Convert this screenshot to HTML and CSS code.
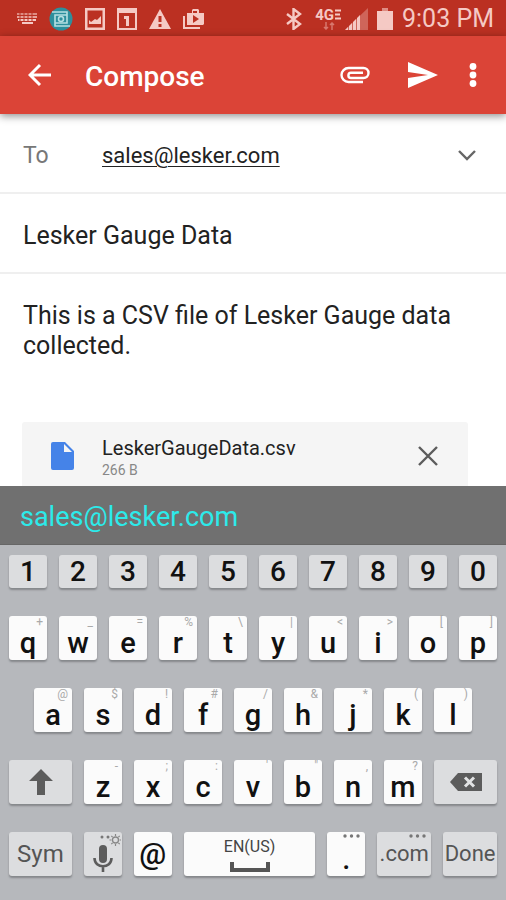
FILE: index.html
```html
<!DOCTYPE html>
<html lang="en">
<head>
<meta charset="utf-8">
<meta name="viewport" content="width=device-width, initial-scale=1">
<title>Compose</title>
<link rel="stylesheet" href="styles.css">
</head>
<body>
<div class="screen">
  <div class="status">
    <div class="status-left">
      <svg width="20" height="12" viewBox="0 0 20 12"><path d="M0 0h20v2H0z" opacity=".6"/><path d="M0 3h20v2H0z" opacity=".75"/><path d="M1 6h18v2H1zM5 9h11v2H5z"/><path d="M3 0v8M7 0v8M11 0v8M15 0v8" stroke="#bb3022" stroke-width="1"/></svg>
      <svg width="24" height="24" viewBox="0 0 24 24"><circle cx="12" cy="12" r="11.500" fill="#2e8f9d"/><g fill="none" stroke="#b5dfe2" stroke-width="1.600"><path d="M3 5h15v3M21 19H6v-3M6 8v8h12V8z"/><circle cx="12" cy="12" r="2.500"/></g></svg>
      <svg width="20" height="22" viewBox="0 0 20 22"><path fill-rule="evenodd" d="M0 0h20v22H0zM2.500 2.500v17h15v-17zM4 16v-4l2 2 4-3 2 1 4-4v8z"/></svg>
      <svg width="20" height="22" viewBox="0 0 20 22"><path fill-rule="evenodd" d="M0 0h20v22H0zM2 5v15h16V5zM7 8h5v10H9v-7H7z"/></svg>
      <svg width="22" height="20" viewBox="0 0 22 20"><path fill-rule="evenodd" d="M11 0l11 20H0zM9.500 7v6h3V7zM9.500 15v3h3v-3z"/></svg>
      <svg width="21" height="20" viewBox="0 0 21 20"><path fill-rule="evenodd" d="M4 4h5V1l1-1h5l1 1v3h5v11l-1 1H4zM10 2v2h4V2zM10 6v8l6-4z"/><path d="M1 7v12h16" fill="none" stroke="#f5c9c4" stroke-width="2"/></svg>
    </div>
    <div class="status-right">
      <svg width="16" height="22" viewBox="0 0 16 22"><path d="M1 6l13 10-6.500 5V1L14 6 1 16" fill="none" stroke="#f5c9c4" stroke-width="2.400"/></svg>
      <span class="network"><b>4G</b><svg width="7" height="12" viewBox="0 0 7 12"><path d="M1 1.500h6M1 5.500h5M1 9.500h6" stroke="#f5c9c4" stroke-width="2"/></svg><svg class="arrows" width="12" height="8" viewBox="0 0 12 8"><path d="M3 0v7M1 5l2 2 2-2M9 8V1M7 3l2-2 2 2" fill="none" stroke="#d8776d" stroke-width="1.500"/></svg></span>
      <svg width="23" height="22" viewBox="0 0 23 22"><path d="M0 22L23 0v22z" opacity=".35"/><path d="M0 22l3-3v3zM4 18l3-3v7H4zM8 14l3-3v11H8zM12 10l3-3v15h-3z"/></svg>
      <svg class="battery" width="16" height="22" viewBox="0 0 16 22"><path d="M0 3h16v19H0z"/><path d="M5 0h6v3H5z" opacity=".6"/></svg>
      <time>9:03 PM</time>
    </div>
  </div>

  <header class="toolbar">
    <button class="icon-btn" aria-label="Back"><svg width="24" height="24" viewBox="0 0 24 24"><path d="M23 12H3M12 2L2 12l10 10" fill="none" stroke="#fff" stroke-width="3"/></svg></button>
    <h1>Compose</h1>
    <button class="icon-btn" aria-label="Attach file"><svg width="30" height="18" viewBox="0 0 30 18"><path d="M23 16H8.500a7 7 0 0 1 0-14h15a5 5 0 0 1 0 10H11a2.600 2.600 0 0 1 0-5.200h12" fill="none" stroke="#fff" stroke-width="2.400"/></svg></button>
    <button class="icon-btn send" aria-label="Send"><svg width="30" height="26" viewBox="0 0 30 26"><path d="M0 0l30 13L0 26V16l20-3L0 10z" fill="#fff"/></svg></button>
    <button class="icon-btn more" aria-label="More options"><svg width="8" height="24" viewBox="0 0 8 24"><g fill="#fff"><circle cx="4" cy="3.500" r="3.400"/><circle cx="4" cy="12" r="3.400"/><circle cx="4" cy="20.500" r="3.400"/></g></svg></button>
  </header>

  <main class="compose">
    <div class="row">
      <label for="to">To</label>
      <input class="to" id="to" type="email" value="sales@lesker.com">
      <button class="icon-btn" aria-label="Show Cc and Bcc"><svg width="18" height="12" viewBox="0 0 18 12"><path d="M1 2l8 8 8-8" fill="none" stroke="#666" stroke-width="2.400"/></svg></button>
    </div>
    <div class="row"><input class="subject" type="text" aria-label="Subject" value="Lesker Gauge Data"></div>
    <textarea class="message" rows="3" aria-label="Message">This is a CSV file of Lesker Gauge data collected.</textarea>
    <section class="attachment">
      <svg width="24" height="30" viewBox="0 0 24 30"><path fill-rule="evenodd" d="M2 1h12l9 9v17a2 2 0 0 1-2 2H2a2 2 0 0 1-2-2V3a2 2 0 0 1 2-2zM13 3v8h8z" fill="#4583e8"/></svg>
      <div class="file"><div class="name">LeskerGaugeData.csv</div><div class="size">266 B</div></div>
      <button class="icon-btn" aria-label="Remove attachment"><svg width="20" height="20" viewBox="0 0 20 20"><path d="M1 1l18 18M19 1L1 19" stroke="#5c5c5c" stroke-width="2.400"/></svg></button>
    </section>
  </main>

  <div class="suggestions"><button>sales@lesker.com</button></div>

  <div class="keyboard">
    <div class="keys digits">
      <button>1</button><button>2</button><button>3</button><button>4</button><button>5</button><button>6</button><button>7</button><button>8</button><button>9</button><button>0</button>
    </div>
    <div class="keys">
      <button>q<small>+</small></button><button>w<small>_</small></button><button>e<small>=</small></button><button>r<small>%</small></button><button>t<small>\</small></button><button>y<small>|</small></button><button>u<small>&lt;</small></button><button>i<small>&gt;</small></button><button>o<small>[</small></button><button>p<small>]</small></button>
    </div>
    <div class="keys inset">
      <button>a<small>@</small></button><button>s<small>$</small></button><button>d<small>!</small></button><button>f<small>#</small></button><button>g<small>/</small></button><button>h<small>&amp;</small></button><button>j<small>*</small></button><button>k<small>(</small></button><button>l<small>)</small></button>
    </div>
    <div class="keys">
      <button class="fn wide" aria-label="Shift"><svg width="24" height="26" viewBox="0 0 24 26"><path d="M12 0l12 12h-8v14H8V12H0z" fill="#5c5c5c"/></svg></button>
      <button>z<small>-</small></button><button>x<small>;</small></button><button>c<small>:</small></button><button>v<small>'</small></button><button>b<small>"</small></button><button>n<small>,</small></button><button>m<small>?</small></button>
      <button class="fn wide" aria-label="Delete"><svg width="32" height="18" viewBox="0 0 32 18"><path d="M0 9l8-9h24v18H8z" fill="#5c5c5c"/><path d="M15 4.500l9 9M24 4.500l-9 9" stroke="#e2e3e4" stroke-width="3"/></svg></button>
    </div>
    <div class="keys">
      <button class="fn wide">Sym</button>
      <button class="fn" aria-label="Voice input"><svg class="mic" width="20" height="28" viewBox="0 0 20 28"><rect x="6" y="0" width="8" height="18" rx="4" fill="#5c5c5c"/><path d="M1.500 13c0 11 17 11 17 0M10 21v6" fill="none" stroke="#5c5c5c" stroke-width="2.600"/></svg><svg class="corner" width="21" height="12" viewBox="0 0 21 12"><g fill="#777"><circle cx="2" cy="3" r="1.500"/><circle cx="8" cy="3" r="1.500"/></g><circle cx="15.500" cy="6" r="3" fill="none" stroke="#888" stroke-width="1.300"/><path d="M15.500 0v2M15.500 10v2M9.500 6h2M19.500 6h2M11.300 1.800l1.300 1.300M18.400 8.900l1.300 1.300M11.300 10.200l1.300-1.300M18.400 3.100l1.300-1.300" stroke="#888" stroke-width="1.200"/></svg></button>
      <button class="at">@</button>
      <button class="space"><span>EN(US)</span><svg width="40" height="11" viewBox="0 0 40 11"><path d="M2 1v8h36V1" fill="none" stroke="#555" stroke-width="4"/></svg></button>
      <button>.<svg class="corner" width="17" height="4" viewBox="0 0 17 4"><g fill="#777"><circle cx="2" cy="2" r="1.700"/><circle cx="8.500" cy="2" r="1.700"/><circle cx="15" cy="2" r="1.700"/></g></svg></button>
      <button class="fn mid">.com<svg class="corner" width="17" height="4" viewBox="0 0 17 4"><g fill="#777"><circle cx="2" cy="2" r="1.700"/><circle cx="8.500" cy="2" r="1.700"/><circle cx="15" cy="2" r="1.700"/></g></svg></button>
      <button class="fn mid">Done</button>
    </div>
  </div>
</div>
</body>
</html>
```
FILE: styles.css
```css
* { box-sizing: border-box; }
body { margin: 0; font-family: Roboto, "Liberation Sans", sans-serif; background: #fff; color: #222; }
button, input, textarea { font: inherit; color: inherit; border: 0; padding: 0; background: none; outline: 0; }
svg { display: block; flex: none; }

.screen { display: flex; flex-direction: column; height: 100vh; }

.status { display: flex; justify-content: space-between; align-items: center; flex: none; height: 36px; padding: 2px 12px 0 17px; background: #bb3022; color: #f5c9c4; fill: #f5c9c4; }
.status-left { display: flex; align-items: center; gap: 12px; }
.status-right { display: flex; align-items: center; }
.status time { margin-left: 9px; font-size: 25px; line-height: 32px; white-space: nowrap; }
.network { position: relative; display: flex; align-items: flex-start; height: 22px; margin: 0 4px 0 13px; font-size: 15px; line-height: 14px; }
.network svg { margin-top: 1px; }
.network .arrows { position: absolute; left: 8px; bottom: 0; }
.battery { margin-left: 9px; }

.toolbar { display: flex; align-items: center; flex: none; height: 78px; padding: 0 29px 0 28px; background: #db4437; box-shadow: 0 2px 8px rgba(0, 0, 0, .45); color: #fff; z-index: 1; }
.toolbar h1 { flex: 1; margin: 0 0 0 33px; padding-top: 3px; font-size: 28px; line-height: 36px; font-weight: 500; }
.icon-btn { display: flex; align-items: center; justify-content: center; flex: none; }
.send { margin-left: 38px; }
.more { margin-left: 31px; }

.compose { flex: 1; min-height: 0; overflow: hidden; display: flex; flex-direction: column; }
.row { display: flex; align-items: center; flex: none; height: 80px; padding: 4px 30px 0 23px; border-bottom: 2px solid #efefef; }
.row label { width: 79px; font-size: 23px; color: #777; }
.row input { flex: 1; min-width: 0; }
.to { font-size: 22px; text-decoration: underline; text-decoration-thickness: 1px; text-underline-offset: 3px; }
.subject { font-size: 25px; }
.message { flex: none; margin: 27px 23px 0; font-size: 25px; line-height: 30px; height: 121px; resize: none; overflow: hidden; }
.attachment { display: flex; align-items: flex-start; flex: none; margin: 0 38px 0 22px; padding: 14px 30px 24px 29px; background: #f5f5f5; border-radius: 3px; }
.attachment > svg { margin-top: 5px; }
.attachment > button { margin-top: 10px; }
.file { flex: 1; margin-left: 27px; }
.name { font-size: 20px; line-height: 24px; }
.size { font-size: 14px; line-height: 20px; color: #888; }

.suggestions { flex: none; display: flex; align-items: center; height: 59px; padding: 3px 20px 0; background: #707070; border-bottom: 1px solid #666; }
.suggestions button { color: #2ceaea; font-size: 27px; line-height: 36px; }

.keyboard { flex: none; display: flex; flex-direction: column; gap: 28px; padding: 10px 9px 24px; background: #b6b8bc; }
.keys { display: flex; gap: 12px; height: 44px; }
.keys.inset { padding: 0 25px; }
.keys button { position: relative; flex: 38 1 0; min-width: 0; display: flex; align-items: flex-end; justify-content: center; padding-bottom: 3px; border-radius: 3px; background: #fbfbfb; box-shadow: 0 2px 2px #85878b; color: #111; font-size: 29px; line-height: 28px; font-weight: 500; }
.keys.digits { height: 33px; }
.keys.digits button { align-items: center; padding: 0; background: #dcdddf; font-size: 28px; }
.keys small { position: absolute; top: 1px; right: 4px; font-size: 12px; line-height: 11px; font-weight: 400; color: #aaa; }
.keys .fn { align-items: center; padding: 0; background: #dcdddf; color: #555; font-size: 24px; font-weight: 400; }
.keys .wide { flex-grow: 63; }
.keys .mid { flex-grow: 54; font-size: 22px; }
.keys .at { align-items: center; padding: 0; font-size: 30px; }
.keys .space { flex-grow: 132; flex-direction: column; align-items: center; justify-content: space-between; padding: 5px 0 4px; font-size: 16px; line-height: 20px; font-weight: 400; color: #444; }
.corner { position: absolute; top: 2px; right: 5px; }
.mic { margin-top: 10px; }
.mic + .corner { right: 1px; }
```
